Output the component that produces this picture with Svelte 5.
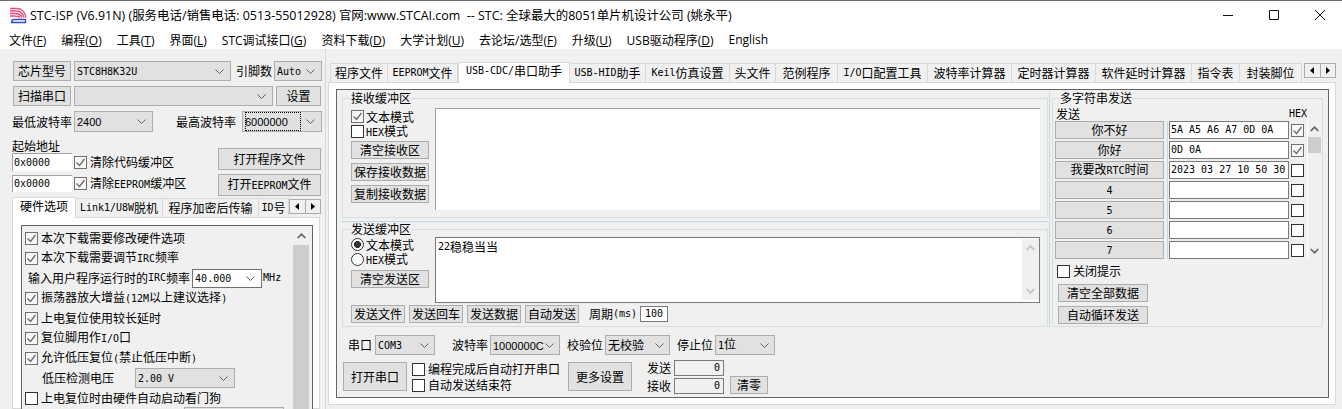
<script>
	const latin = /([\x00-\x7f]+)/;
	const runs = (s) => String(s).split(latin).filter(Boolean);
	const isLatin = (r) => latin.test(r);

	const menu = [
		['文件(', 'F', ')'], ['编程(', 'O', ')'], ['工具(', 'T', ')'], ['界面(', 'L', ')'],
		['STC调试接口(', 'G', ')'], ['资料下载(', 'D', ')'], ['大学计划(', 'U', ')'],
		['去论坛/选型(', 'F', ')'], ['升级(', 'U', ')'], ['USB驱动程序(', 'D', ')'], ['English', '', '']
	];
	const mainTabs = [
		['程序文件', 58], ['EEPROM文件', 70], ['USB-CDC/串口助手', 112], ['USB-HID助手', 76], ['Keil仿真设置', 84],
		['头文件', 46], ['范例程序', 62], ['I/O口配置工具', 90], ['波特率计算器', 84], ['定时器计算器', 84],
		['软件延时计算器', 96], ['指令表', 48], ['封装脚位', 62]
	];
	const hwTabs = [['硬件选项', 64], ['Link1/U8W脱机', 87], ['程序加密后传输', 96], ['ID号', 30]];
	const strings = [
		['你不好', '5A A5 A6 A7 0D 0A', true], ['你好', '0D 0A', true], ['我要改RTC时间', '2023 03 27 10 50 30', false],
		['4', '', false], ['5', '', false], ['6', '', false], ['7', '', false]
	];
</script>

{#snippet t(s)}{#each runs(s) as r}{#if isLatin(r)}<span class="lat">{r}</span>{:else}<span>{r}</span>{/if}{/each}{/snippet}

{#snippet chevron()}
	<svg class="chev" width="9" height="5" viewBox="0 0 9 5"><path d="M.5.5l4 4 4-4" fill="none" stroke="#606060" /></svg>
{/snippet}

{#snippet sel(s, kind = '')}
	<div class="sel {kind}">
		<span class="sel-val">{@render t(s)}</span>
		{@render chevron()}
	</div>
{/snippet}

{#snippet chk(on)}
	<span class="chk" class:on>
		{#if on}
			<svg width="11" height="11" viewBox="0 0 11 11"><path d="M1.5 5.5l3 3 5-6.5" fill="none" stroke="#6a6a6a" stroke-width="1.3" /></svg>
		{/if}
	</span>
{/snippet}

{#snippet check(s, on)}
	<div class="check">{@render chk(on)}<span class="check-label">{@render t(s)}</span></div>
{/snippet}

{#snippet radio(s, on)}
	<div class="check"><span class="radio" class:on></span><span class="check-label">{@render t(s)}</span></div>
{/snippet}

{#snippet arrows()}
	<div class="tab-arrows">
		<span><svg width="5" height="7" viewBox="0 0 5 7"><path d="M4 0v7L0 3.5z" /></svg></span>
		<span><svg width="5" height="7" viewBox="0 0 5 7"><path d="M1 0v7l4-3.5z" /></svg></span>
	</div>
{/snippet}

{#snippet up()}
	<svg width="9" height="6" viewBox="0 0 9 6"><path d="M.7 5l3.8-3.8L8.3 5" fill="none" stroke="#606060" stroke-width="1.6" /></svg>
{/snippet}

{#snippet down()}
	<svg width="9" height="6" viewBox="0 0 9 6"><path d="M.7 1l3.8 3.8L8.3 1" fill="none" stroke="#606060" stroke-width="1.6" /></svg>
{/snippet}

<div class="win">
	<header class="title">
		<svg class="logo" width="17" height="17" viewBox="0 0 17 17">
			<g fill="none" stroke="#ee4a7c" stroke-width="1.5">
				<path d="M0 1.500h7c4 0 8 3 9 9" />
				<path d="M0 4h6c4 0 7 3 8 6.500" />
				<path d="M0 6.500h5c3 0 6 2 7 4" />
				<path d="M0 9h4c2 0 5 .5 6 1.500" />
			</g>
			<path d="M1.500 15.500c0-2 1-3 3-3h11v3z" fill="none" stroke="#2f4fc8" stroke-width="1.300" />
		</svg>
		<span class="title-text">STC-ISP (V6.91N) (服务电话/销售电话: 0513-55012928) 官网:www.STCAI.com&nbsp; -- STC: 全球最大的8051单片机设计公司 (姚永平)</span>
		<div class="caption">
			<svg width="12" height="12" viewBox="0 0 12 12"><path d="M1 6.500h10" stroke="#111" /></svg>
			<svg width="12" height="12" viewBox="0 0 12 12"><path d="M1.500 1.500h9v9h-9z" fill="none" stroke="#111" /></svg>
			<svg width="12" height="12" viewBox="0 0 12 12"><path d="M1 1l10 10M11 1L1 11" stroke="#111" /></svg>
		</div>
	</header>

	<nav class="menu">
		{#each menu as m}
			<span>{m[0]}<u>{m[1]}</u>{m[2]}</span>
		{/each}
	</nav>

	<main class="body">
		<section class="left">
			<div class="row row-chip">
				<button>{@render t('芯片型号')}</button>
				{@render sel('STC8H8K32U')}
				<div class="lbl lbl-pins">{@render t('引脚数')}</div>
				{@render sel('Auto')}
			</div>
			<div class="row row-scan">
				<button>{@render t('扫描串口')}</button>
				{@render sel('')}
				<button>{@render t('设置')}</button>
			</div>
			<div class="row row-baud">
				<div class="lbl lbl-out">{@render t('最低波特率')}</div>
				{@render sel('2400', 'num')}
				<div class="lbl lbl-end">{@render t('最高波特率')}</div>
				{@render sel('6000000', 'num focus')}
			</div>
			<div class="row-addr">
				<div class="addr-left">
					<div class="lbl lbl-addr">{@render t('起始地址')}</div>
					<div class="addr-row">
						<div class="addr">{@render t('0x0000')}</div>
						{@render check('清除代码缓冲区', true)}
					</div>
					<div class="addr-row second">
						<div class="addr">{@render t('0x0000')}</div>
						{@render check('清除EEPROM缓冲区', true)}
					</div>
				</div>
				<div class="addr-right">
					<button>{@render t('打开程序文件')}</button>
					<button>{@render t('打开EEPROM文件')}</button>
				</div>
			</div>

			<div class="tabs hw-tabs">
				{#each hwTabs as tab, i}
					<div class="tab" class:active={i === 0} style="width:{tab[1]}px">{@render t(tab[0])}</div>
				{/each}
				{@render arrows()}
			</div>
			<div class="hw-pane">
				<div class="hw-list">
					<div class="hw-rows">
						{@render check('本次下载需要修改硬件选项', true)}
						{@render check('本次下载需要调节IRC频率', true)}
						<div class="hw-irc">
							<span class="lbl">{@render t('输入用户程序运行时的IRC频率')}</span>
							{@render sel('40.000', 'white')}
							<span class="lbl">{@render t('MHz')}</span>
						</div>
						{@render check('振荡器放大增益(12M以上建议选择)', true)}
						{@render check('上电复位使用较长延时', true)}
						{@render check('复位脚用作I/O口', true)}
						{@render check('允许低压复位(禁止低压中断)', true)}
						<div class="hw-volt">
							<span class="lbl">{@render t('低压检测电压')}</span>
							{@render sel('2.00 V')}
						</div>
						{@render check('上电复位时由硬件自动启动看门狗', false)}
						<div class="hw-next"><button aria-label="下一项"></button></div>
					</div>
					<div class="vscroll">
						<div class="vscroll-arrow">{@render up()}</div>
						<div class="vscroll-thumb"></div>
					</div>
				</div>
			</div>
		</section>

		<section class="right">
			<div class="tabs main-tabs">
				{#each mainTabs as tab, i}
					<div class="tab" class:active={i === 2} style="width:{tab[1]}px">{@render t(tab[0])}</div>
				{/each}
				{@render arrows()}
			</div>
			<div class="pane">
				<div class="dialog">
					<div class="upper">
						<div class="buffers">
							<fieldset class="group recv">
								<legend>{@render t('接收缓冲区')}</legend>
								<div class="side">
									{@render check('文本模式', true)}
									{@render check('HEX模式', false)}
									<button class="side-first">{@render t('清空接收区')}</button>
									<button>{@render t('保存接收数据')}</button>
									<button>{@render t('复制接收数据')}</button>
								</div>
								<div class="recv-area"></div>
							</fieldset>
							<div class="hsplit"></div>
							<fieldset class="group send">
								<legend>{@render t('发送缓冲区')}</legend>
								<div class="send-top">
									<div class="side">
										{@render radio('文本模式', true)}
										{@render radio('HEX模式', false)}
										<button class="side-clear">{@render t('清空发送区')}</button>
									</div>
									<div class="send-area">
										<div class="send-text">{@render t('22稳稳当当')}</div>
										<div class="send-scroll">{@render up()}{@render down()}</div>
									</div>
								</div>
								<div class="send-bar">
									<button>{@render t('发送文件')}</button>
									<button>{@render t('发送回车')}</button>
									<button>{@render t('发送数据')}</button>
									<button>{@render t('自动发送')}</button>
									<span class="lbl period">{@render t('周期(ms)')}</span>
									<div class="period-input">{@render t('100')}</div>
								</div>
							</fieldset>
						</div>
						<div class="vsplit"></div>

						<fieldset class="group multi">
							<legend>{@render t('多字符串发送')}</legend>
							<div class="multi-head">
								<span class="lbl">{@render t('发送')}</span>
								<span class="lbl">{@render t('HEX')}</span>
							</div>
							<div class="multi-body">
								<div class="multi-rows">
									{#each strings as s}
										<button>{@render t(s[0])}</button>
										<div class="str">{@render t(s[1])}</div>
										<div class="str-chk">{@render chk(s[2])}</div>
									{/each}
								</div>
								<div class="multi-scroll">
									<div class="multi-up">{@render up()}</div>
									<div class="multi-thumb"></div>
									<div class="multi-down">{@render down()}</div>
								</div>
							</div>
							<div class="multi-foot">
								{@render check('关闭提示', false)}
								<button>{@render t('清空全部数据')}</button>
								<button>{@render t('自动循环发送')}</button>
							</div>
						</fieldset>
					</div>

					<div class="port-row">
						<span class="lbl">{@render t('串口')}</span>
						{@render sel('COM3')}
						<span class="lbl lbl-end">{@render t('波特率')}</span>
						{@render sel('1000000C', 'num')}
						<span class="lbl lbl-end">{@render t('校验位')}</span>
						{@render sel('无校验')}
						<span class="lbl lbl-end">{@render t('停止位')}</span>
						{@render sel('1位')}
					</div>
					<div class="open-row">
						<button>{@render t('打开串口')}</button>
						<div class="open-checks">
							{@render check('编程完成后自动打开串口', false)}
							{@render check('自动发送结束符', false)}
						</div>
						<button>{@render t('更多设置')}</button>
						<div class="counts">
							<span class="lbl">{@render t('发送')}</span>
							<div class="count">{@render t('0')}</div>
							<span></span>
							<span class="lbl">{@render t('接收')}</span>
							<div class="count">{@render t('0')}</div>
							<button>{@render t('清零')}</button>
						</div>
					</div>
				</div>
			</div>
		</section>
	</main>
</div>

<style>
	:global(body) {
		margin: 0;
		overflow: hidden;
		background: #f0f0f0;
	}

	.win {
		width: 1342px;
		height: 409px;
		overflow: hidden;
		display: flex;
		flex-direction: column;
		box-sizing: border-box;
		border-top: 1px solid #6e6e6e;
		font: 12px/14px 'Noto Sans CJK SC', sans-serif;
		color: #000;
		background: #f0f0f0;
	}

	.lat {
		font-family: 'DejaVu Sans Mono', monospace;
		font-size: 10px;
	}

	.title {
		height: 29px;
		flex: none;
		display: flex;
		align-items: center;
		box-sizing: border-box;
		padding: 0 0 1px 10px;
		background: #fff;
		font: 12.45px 'Open Sans', 'Noto Sans CJK SC', sans-serif;
	}

	.logo {
		margin-right: 3px;
	}

	.title-text {
		white-space: nowrap;
	}

	.caption {
		margin-left: auto;
		display: flex;
		gap: 34px;
		padding-right: 16px;
	}

	.menu {
		height: 19px;
		flex: none;
		display: flex;
		align-items: center;
		gap: 15px;
		padding-left: 9px;
		background: #fff;
		font: 12px 'Open Sans', 'Noto Sans CJK SC', sans-serif;
		white-space: nowrap;
	}

	.body {
		flex: 1;
		display: flex;
		min-height: 0;
	}

	button {
		padding: 0;
		margin: 0;
		font: inherit;
		color: #000;
		background: #e1e1e1;
		border: 1px solid #adadad;
		white-space: nowrap;
	}

	.lbl {
		display: flex;
		align-items: center;
		white-space: pre;
	}

	.sel {
		box-sizing: border-box;
		display: flex;
		align-items: center;
		justify-content: space-between;
		background: #e1e1e1;
		border: 1px solid #adadad;
		padding: 0 6px 0 2px;
		white-space: pre;
	}

	.sel-val {
		flex: 1;
		min-width: 0;
	}

	.sel.white {
		background: #fff;
		border-color: #707070;
	}

	.sel.num .lat {
		font-family: 'Liberation Sans', sans-serif;
		font-size: 11px;
	}

	.sel.focus .sel-val {
		outline: 1px dotted #000;
		outline-offset: -1px;
		padding: 2px 0;
		margin-right: 3px;
	}

	.chev {
		flex: none;
		margin-left: 2px;
	}

	.check {
		display: flex;
		align-items: center;
		gap: 3px;
		white-space: pre;
	}

	.check-label {
		display: block;
	}

	.chk {
		box-sizing: border-box;
		display: flex;
		width: 13px;
		height: 13px;
		flex: none;
		background: #fff;
		border: 1px solid #333;
	}

	.chk.on {
		border-color: #707070;
		background: #f7f7f7;
	}

	.radio {
		box-sizing: border-box;
		width: 13px;
		height: 13px;
		flex: none;
		border-radius: 50%;
		background: #fff;
		border: 1px solid #333;
	}

	.radio.on {
		background: radial-gradient(circle, #333 3.2px, #fff 3.8px);
	}

	/* left column */
	.left {
		width: 326px;
		flex: none;
		box-sizing: border-box;
		padding: 12px 0 0 13px;
		border-right: 1px solid #d9d9d9;
		display: flex;
		flex-direction: column;
	}

	.row {
		display: grid;
		column-gap: 3px;
		height: 20px;
		width: 309px;
	}

	.row-chip {
		grid-template-columns: 58px 157px 37px 48px;
	}

	.lbl-pins {
		padding-left: 2px;
	}

	.row-scan {
		margin-top: 5px;
		grid-template-columns: 58px 199px 45px;
	}

	.row-baud {
		margin-top: 5px;
		grid-template-columns: 58px 79px 1fr 80px;
	}

	.lbl-out {
		margin-left: -1px;
	}

	.lbl-end {
		justify-content: flex-end;
	}

	.row-baud .lbl-end {
		padding-right: 3px;
	}

	.row-addr {
		margin-top: 8px;
		display: grid;
		grid-template-columns: 205px 103px;
	}

	.addr-left {
		margin-left: -1px;
	}

	.lbl-addr {
		height: 13px;
	}

	.addr-row {
		margin-top: 1px;
		height: 18px;
		display: flex;
		align-items: center;
		gap: 2px;
	}

	.addr-row.second {
		margin-top: 4px;
		height: 17px;
	}

	.addr {
		box-sizing: border-box;
		width: 60px;
		height: 100%;
		display: flex;
		align-items: center;
		padding-left: 1px;
		background: #fff;
		border-top: 1px solid #a0a0a0;
		border-left: 1px solid #a0a0a0;
	}

	.addr-right {
		display: flex;
		flex-direction: column;
		gap: 4px;
		padding-top: 9px;
	}

	.addr-right button {
		height: 22px;
	}

	.tabs {
		display: flex;
		align-items: flex-end;
		position: relative;
		white-space: nowrap;
	}

	.tab {
		box-sizing: border-box;
		height: 19px;
		display: flex;
		align-items: center;
		justify-content: center;
		background: #f0f0f0;
		border: 1px solid #d9d9d9;
		border-left: 0;
		border-bottom: 0;
	}

	.tab:first-child {
		border-left: 1px solid #d9d9d9;
	}

	.tab.active {
		height: 21px;
		background: #fff;
		position: relative;
		z-index: 1;
		margin-bottom: -1px;
		align-items: flex-start;
		padding-top: 1px;
		border-left: 1px solid #d9d9d9;
	}

	.tab-arrows {
		box-sizing: border-box;
		position: absolute;
		right: 0;
		bottom: 3px;
		display: flex;
		width: 32px;
		height: 15px;
		border: 1px solid #adadad;
		background: #f0f0f0;
	}

	.tab-arrows span {
		flex: 1;
		display: flex;
		align-items: center;
		justify-content: center;
	}

	.tab-arrows span + span {
		border-left: 1px solid #adadad;
	}

	.hw-tabs {
		margin: 1px 0 0 -1px;
		width: 309px;
		height: 20px;
	}

	.hw-pane {
		flex: 1;
		margin-left: -1px;
		width: 308px;
		box-sizing: border-box;
		background: #fff;
		border: 1px solid #d9d9d9;
		padding: 7px 6px 0 8px;
		min-height: 0;
	}

	.hw-list {
		box-sizing: border-box;
		height: 200px;
		background: #f0f0f0;
		border: 1px solid #646464;
		display: flex;
		justify-content: space-between;
		overflow: hidden;
	}

	.hw-rows {
		display: grid;
		grid-auto-rows: 20px;
		padding: 2px 0 0 3px;
		align-content: start;
	}

	.hw-irc {
		display: flex;
		align-items: center;
		padding-left: 3px;
	}

	.hw-irc .sel {
		width: 70px;
		height: 19px;
		margin-left: 2px;
	}

	.hw-irc .lbl:last-child {
		margin-left: 1px;
	}

	.hw-volt {
		display: flex;
		align-items: center;
		padding-left: 17px;
		gap: 21px;
	}

	.hw-volt .sel {
		width: 100px;
		height: 20px;
	}

	.hw-next button {
		display: block;
		width: 100px;
		height: 18px;
		margin: -1px 0 0 159px;
	}

	.vscroll {
		width: 16px;
		margin-right: 3px;
		display: flex;
		flex-direction: column;
		background: #f0f0f0;
	}

	.vscroll-arrow {
		height: 19px;
		display: flex;
		align-items: center;
		justify-content: center;
	}

	.vscroll-thumb {
		flex: 1;
		background: #cdcdcd;
	}

	/* right column */
	.right {
		flex: 1;
		min-width: 0;
		box-sizing: border-box;
		padding: 11px 6px 0 2px;
		display: flex;
		flex-direction: column;
	}

	.main-tabs {
		height: 22px;
		padding-left: 2px;
	}

	.main-tabs .tab-arrows {
		bottom: 4px;
	}

	.pane {
		box-sizing: border-box;
		height: 323px;
		background: #fff;
		border: 1px solid #d9d9d9;
		padding: 6px 6px 7px 7px;
	}

	.dialog {
		box-sizing: border-box;
		height: 309px;
		background: #f0f0f0;
		border: 1px solid #646464;
		padding: 1px 0 0 5px;
		display: flex;
		flex-direction: column;
	}

	.upper {
		display: flex;
		height: 236px;
		flex: none;
	}

	.buffers {
		width: 706px;
		flex: none;
		display: flex;
		flex-direction: column;
	}

	.hsplit {
		height: 1px;
		flex: none;
		margin-top: 3px;
		background: #bcdcec;
	}

	.vsplit {
		width: 1px;
		flex: none;
		margin: 1px 2px -2px 1px;
		background: #bcdcec;
	}

	.group {
		margin: 0;
		min-width: 0;
		padding: 0;
		border: 1px solid #dcdcdc;
		box-sizing: border-box;
	}

	legend {
		padding: 0;
		height: 14px;
		line-height: 14px;
		background: #f0f0f0;
	}

	.recv {
		height: 127px;
		padding: 4px 0 0 8px;
		display: flex;
		gap: 6px;
	}

	.side {
		width: 78px;
		flex: none;
		display: flex;
		flex-direction: column;
	}

	.side .check {
		height: 15px;
		gap: 2px;
	}

	.side button {
		height: 18px;
		margin-top: 4px;
	}

	.side .side-first {
		margin-top: 2px;
	}

	.side .side-clear {
		margin-top: 3px;
	}

	.recv-area {
		width: 605px;
		height: 102px;
		margin-top: -1px;
		box-sizing: border-box;
		background: #fff;
		border-top: 1px solid #a0a0a0;
		border-left: 1px solid #a0a0a0;
	}

	.send {
		height: 105px;
		padding: 1px 0 0 8px;
	}

	.send-top {
		display: flex;
		gap: 6px;
		height: 66px;
	}

	.send-area {
		flex: none;
		width: 605px;
		height: 66px;
		box-sizing: border-box;
		background: #fff;
		border: 1px solid #7a7a7a;
		display: flex;
		justify-content: space-between;
	}

	.send-text {
		padding: 2px 0 0 2px;
		display: flex;
		align-items: flex-start;
		white-space: pre;
	}

	.send-scroll {
		width: 17px;
		margin: 1px 0 2px;
		display: flex;
		flex-direction: column;
		align-items: center;
		justify-content: space-between;
		padding: 6px 0;
		box-sizing: border-box;
		background: #f0f0f0;
	}

	.send-scroll path {
		stroke: #bfbfbf;
	}

	.send-bar {
		display: flex;
		margin-top: 2px;
		height: 18px;
		gap: 4px;
	}

	.send-bar button {
		width: 54px;
	}

	.period {
		margin-left: 6px;
	}

	.period-input {
		box-sizing: border-box;
		width: 28px;
		height: 16px;
		margin: 1px 0 0 -1px;
		display: flex;
		align-items: center;
		justify-content: center;
		background: #fff;
		border: 1px solid #7a7a7a;
	}

	.multi {
		width: 271px;
		height: 236px;
		padding: 0 0 0 2px;
	}

	.multi legend {
		margin-left: 5px;
	}

	.multi-head {
		height: 14px;
		margin-top: 2px;
		display: flex;
		justify-content: space-between;
		padding: 0 15px 0 1px;
	}

	.multi-body {
		display: flex;
	}

	.multi-rows {
		display: grid;
		grid-template-columns: 109px 125px 15px;
		grid-auto-rows: 18px;
		row-gap: 2px;
		background: linear-gradient(#bcdcec, #bcdcec) 112px 0 / 1px 100% no-repeat;
	}

	.str {
		box-sizing: border-box;
		margin-left: 5px;
		display: flex;
		align-items: center;
		background: #fff;
		border: 1px solid #7a7a7a;
		padding-left: 1px;
		white-space: pre;
	}

	.str-chk {
		display: flex;
		align-items: center;
		justify-content: flex-end;
	}

	.multi-scroll {
		box-sizing: border-box;
		width: 14px;
		height: 138px;
		margin-left: 3px;
		display: flex;
		flex-direction: column;
		background: #f0f0f0;
		border-left: 1px solid #fff;
	}

	.multi-up,
	.multi-down {
		height: 16px;
		display: flex;
		align-items: center;
		justify-content: center;
	}

	.multi-down {
		margin-top: auto;
	}

	.multi-thumb {
		height: 16px;
		background: #cdcdcd;
	}

	.multi-foot {
		display: flex;
		flex-direction: column;
		align-items: flex-start;
		padding: 5px 0 0 2px;
	}

	.multi-foot .check {
		height: 14px;
	}

	.multi-foot button {
		width: 90px;
		height: 18px;
		margin: 4px 0 0 1px;
	}

	.multi-foot .check + button {
		margin-top: 6px;
	}

	.port-row {
		margin-top: 8px;
		height: 20px;
		flex: none;
		display: grid;
		grid-template-columns: 25px 60px 51px 70px 41px 65px 41px 60px;
		column-gap: 2px;
		padding-left: 6px;
	}

	.port-row .sel {
		padding-right: 5px;
	}

	.open-row {
		margin-top: 6px;
		display: flex;
		align-items: flex-start;
	}

	.open-row > button {
		height: 29px;
		width: 64px;
		margin-left: 1px;
		margin-top: 1px;
	}

	.open-checks {
		width: 161px;
		box-sizing: border-box;
		padding: 1px 0 0 5px;
		display: flex;
		flex-direction: column;
		gap: 2px;
	}

	.open-row > button + .open-checks + button {
		margin-left: 0;
	}

	.counts {
		margin: -1px 0 0 15px;
		display: grid;
		grid-template-columns: 24px 50px 41px;
		grid-auto-rows: 16px;
		column-gap: 3px;
		row-gap: 2px;
	}

	.count {
		box-sizing: border-box;
		display: flex;
		align-items: center;
		justify-content: flex-end;
		padding-right: 3px;
		background: #f0f0f0;
		border: 1px solid #7a7a7a;
	}

	.counts button {
		margin: -2px 0 0 3px;
		height: 18px;
	}
</style>
